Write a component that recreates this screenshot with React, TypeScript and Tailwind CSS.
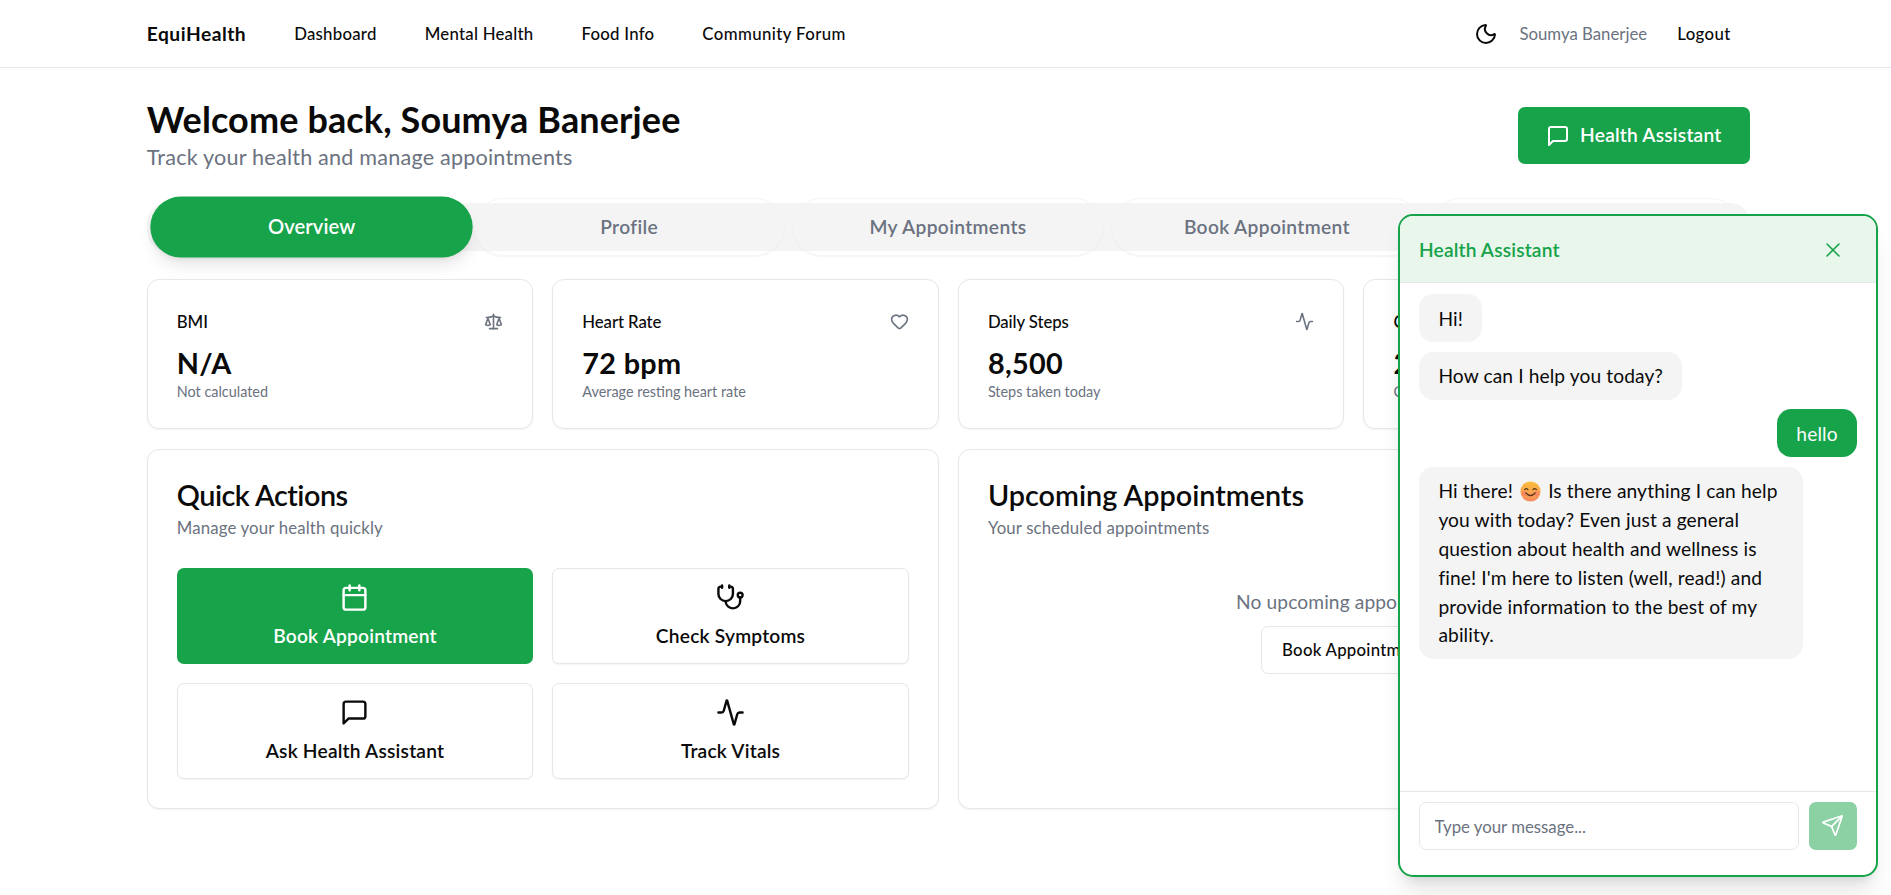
import React from "react";
import { Moon, X, Scale, Heart, Activity, Calendar, Stethoscope, Send } from "lucide-react";

function Chat({ size }: { size: number }) {
  return (
    <svg width={size} height={size} viewBox="0 0 24 24" fill="none" stroke="currentColor" strokeWidth="2" strokeLinecap="round" strokeLinejoin="round">
      <path d="M21 15a2 2 0 0 1-2 2H7l-4 4V5a2 2 0 0 1 2-2h14a2 2 0 0 1 2 2z" />
    </svg>
  );
}

function Smile() {
  return (
    <svg width="21" height="21" viewBox="0 0 20 20" className="inline-block align-[-4px] mx-[2px]">
      <defs>
        <linearGradient id="sm" x1="0" y1="0" x2="0" y2="1">
          <stop offset="0" stopColor="#fbbf3c" />
          <stop offset="1" stopColor="#f98a5f" />
        </linearGradient>
      </defs>
      <circle cx="10" cy="10" r="9.6" fill="url(#sm)" />
      <circle cx="4.2" cy="12" r="2.4" fill="#f9746f" opacity="0.55" />
      <circle cx="15.8" cy="12" r="2.4" fill="#f9746f" opacity="0.55" />
      <path d="M4.4 8.2q1.6-2 3.2 0M12.4 8.2q1.6-2 3.2 0" fill="none" stroke="#5b3a1e" strokeWidth="1.2" strokeLinecap="round" />
      <path d="M5.6 11.4q4.4 4.8 8.8 0" fill="none" stroke="#5b3a1e" strokeWidth="1.3" strokeLinecap="round" />
    </svg>
  );
}

function Stat({ title, value, sub, icon }: { title: string; value: string; sub: string; icon: React.ReactNode }) {
  return (
    <div className="h-[150px] rounded-[12px] border border-[#e5e7eb] bg-white shadow-xs px-[29px] pt-[27px]">
      <div className="flex items-center justify-between h-[29px]">
        <span className="text-[16.8px] tracking-[-0.1px] font-medium text-[#0a0a0a]">{title}</span>
        {icon}
      </div>
      <div className="text-[28.8px] tracking-[0.3px] leading-[34px] font-bold text-[#0a0a0a] mt-[10px]">{value}</div>
      <div className="text-[14.4px] leading-[20px] text-[#6b7280] mt-[2px]">{sub}</div>
    </div>
  );
}

function Action({ label, icon, primary }: { label: string; icon: React.ReactNode; primary?: boolean }) {
  return (
    <button
      className={
        primary
          ? "h-[96px] pb-[2px] rounded-[7px] bg-[#16a34a] text-white flex flex-col items-center justify-center gap-[12px]"
          : "h-[96px] pb-[2px] rounded-[7px] border border-[#e5e7eb] bg-white text-[#0a0a0a] flex flex-col items-center justify-center gap-[12px] shadow-xs"
      }
    >
      {icon}
      <span className="text-[19.2px] tracking-[0.2px] leading-[24px] font-semibold">{label}</span>
    </button>
  );
}

function Bubble({ children, me, wide }: { children: React.ReactNode; me?: boolean; wide?: boolean }) {
  return (
    <div className={me ? "flex justify-end" : "flex justify-start"}>
      <div
        className={
          me
            ? "rounded-[14.4px] bg-[#16a34a] text-[#f8fafc] px-[19.2px] pt-[10.6px] pb-[8.6px] text-[19.2px] tracking-[0.1px] leading-[28.8px]"
            : wide
            ? "w-[384px] rounded-[14.4px] bg-[#f4f4f5] text-[#0a0a0a] px-[19.2px] pt-[10.6px] pb-[8.6px] text-[19.2px] tracking-[0.12px] leading-[28.8px]"
            : "rounded-[14.4px] bg-[#f4f4f5] text-[#0a0a0a] px-[19.2px] pt-[10.6px] pb-[8.6px] text-[19.2px] tracking-[0.1px] leading-[28.8px]"
        }
      >
        {children}
      </div>
    </div>
  );
}

export default function App() {
  return (
    <div className="relative min-h-[895px] overflow-hidden bg-white text-[#0a0a0a] font-['Lato','Open_Sans',sans-serif]">
      <header className="h-[68px] border-b border-[#e5e7eb]">
        <div className="ml-[146.8px] w-[1603px] h-full pt-[1px] flex items-center justify-between">
          <div className="flex items-center gap-[48px]">
            <span className="text-[19.2px] tracking-[0.5px] font-bold">EquiHealth</span>
            <nav className="flex items-center gap-[48px] text-[16.8px] tracking-[0.25px] font-medium">
              <a>Dashboard</a>
              <a>Mental Health</a>
              <a>Food Info</a>
              <a className="tracking-[0.4px]">Community Forum</a>
            </nav>
          </div>
          <div className="flex items-center mr-[19px] text-[16.8px]">
            <Moon size={24} strokeWidth={2} className="mr-[21px]" />
            <span className="text-[#6b7280] mr-[30px]">Soumya Banerjee</span>
            <span className="font-medium tracking-[0.4px]">Logout</span>
          </div>
        </div>
      </header>

      <main className="ml-[146.8px] w-[1603px]">
        <div className="flex items-start justify-between pt-[27px]">
          <div>
            <h1 className="text-[36px] tracking-[0.12px] leading-[48px] font-bold">Welcome back, Soumya Banerjee</h1>
            <p className="text-[21.6px] tracking-[0.2px] leading-[29px] text-[#6b7280]">Track your health and manage appointments</p>
          </div>
          <button className="mt-[12px] h-[57px] w-[232px] rounded-[7px] bg-[#16a34a] text-white flex items-center justify-center gap-[10px] text-[19.2px] tracking-[0.2px] font-semibold">
            <Chat size={24} />
            Health Assistant
          </button>
        </div>

        <div className="mt-[31px] h-[48px] rounded-[20px] bg-[#f4f4f5] flex gap-[9.6px] pl-[10.8px] pr-[9.4px] items-center">
          <div className="flex-1 h-[57.6px] pt-[2px] scale-105 rounded-full bg-[#16a34a] text-white shadow-lg flex items-center justify-center text-[19.2px] tracking-[0.1px] font-semibold">Overview</div>
          {["Profile", "My Appointments", "Book Appointment", "Health Records"].map((t) => (
            <div key={t} className="flex-1 h-[57.6px] rounded-full border border-[#f5f5f6] shadow-xs flex items-center justify-center text-[19.2px] tracking-[0.35px] font-semibold text-[#6b7280]">{t}</div>
          ))}
        </div>

        <div className="mt-[28px] grid grid-cols-4 gap-[19.2px]">
          <Stat title="BMI" value="N/A" sub="Not calculated" icon={<Scale size={19} className="text-[#6b7280]" />} />
          <Stat title="Heart Rate" value="72 bpm" sub="Average resting heart rate" icon={<Heart size={19} className="text-[#6b7280]" />} />
          <Stat title="Daily Steps" value="8,500" sub="Steps taken today" icon={<Activity size={19} className="text-[#6b7280]" />} />
          <Stat title="Calories" value="2,000" sub="Calories burned today" icon={<Activity size={19} className="text-[#6b7280]" />} />
        </div>

        <div className="mt-[20px] grid grid-cols-2 gap-[19.2px]">
          <section className="h-[360px] rounded-[12px] border border-[#e5e7eb] bg-white shadow-xs px-[29px] pt-[28px]">
            <h2 className="text-[28.8px] tracking-[-0.5px] leading-[34px] font-semibold">Quick Actions</h2>
            <p className="text-[16.8px] tracking-[0.15px] leading-[24px] text-[#6b7280] mt-[4px]">Manage your health quickly</p>
            <div className="mt-[28px] grid grid-cols-2 gap-[19.2px]">
              <Action primary label="Book Appointment" icon={<Calendar size={29} strokeWidth={2} />} />
              <Action label="Check Symptoms" icon={<Stethoscope size={29} strokeWidth={2} />} />
              <Action label="Ask Health Assistant" icon={<Chat size={29} />} />
              <Action label="Track Vitals" icon={<Activity size={29} strokeWidth={2} />} />
            </div>
          </section>
          <section className="h-[360px] rounded-[12px] border border-[#e5e7eb] bg-white shadow-xs px-[29px] pt-[28px]">
            <h2 className="text-[28.8px] leading-[34px] font-semibold">Upcoming Appointments</h2>
            <p className="text-[16.8px] tracking-[0.15px] leading-[24px] text-[#6b7280] mt-[4px]">Your scheduled appointments</p>
            <div className="mt-[48px] flex flex-col items-center">
              <p className="text-[19.2px] tracking-[0.1px] leading-[28px] text-[#6b7280]">No upcoming appointments</p>
              <button className="mt-[10px] h-[48px] w-[186px] rounded-[7px] border border-[#e5e7eb] bg-white text-[16.8px] tracking-[0.25px] font-medium">Book Appointment</button>
            </div>
          </section>
        </div>
      </main>

      <aside className="absolute left-[1398px] top-[214px] w-[480px] h-[663px] rounded-[15px] border-2 border-[#16a34a] bg-white shadow-xl flex flex-col overflow-hidden">
        <div className="h-[67px] pt-[2px] shrink-0 bg-[#e8f6ec] border-b border-[#e5e7eb] flex items-center justify-between pl-[19px] pr-[31px]">
          <span className="text-[19.2px] tracking-[0.15px] font-semibold text-[#16a34a]">Health Assistant</span>
          <X size={24} strokeWidth={1.6} className="text-[#16a34a]" />
        </div>
        <div className="flex-1 px-[19.2px] pt-[11px] flex flex-col gap-[9.6px]">
          <Bubble>Hi!</Bubble>
          <Bubble>How can I help you today?</Bubble>
          <Bubble me>hello</Bubble>
          <Bubble wide>
            Hi there! <Smile /> Is there anything I can help<br />you with today? Even just a general<br />question about health and wellness is<br />fine! I'm here to listen (well, read!) and<br />provide information to the best of my<br />ability.
          </Bubble>
        </div>
        <div className="h-[84px] shrink-0 border-t border-[#e5e7eb] px-[19.2px] pt-[9.6px] flex gap-[9.6px] items-start">
          <input placeholder="Type your message..." className="flex-1 h-[48px] pt-[2px] rounded-[7px] border border-[#e5e7eb] px-[14.4px] text-[16.8px] placeholder:text-[#6b7280] outline-none" />
          <button className="w-[48px] h-[48px] rounded-[7px] bg-[#8bd1a4] text-white flex items-center justify-center">
            <Send size={23} strokeWidth={1.8} />
          </button>
        </div>
      </aside>
    </div>
  );
}
